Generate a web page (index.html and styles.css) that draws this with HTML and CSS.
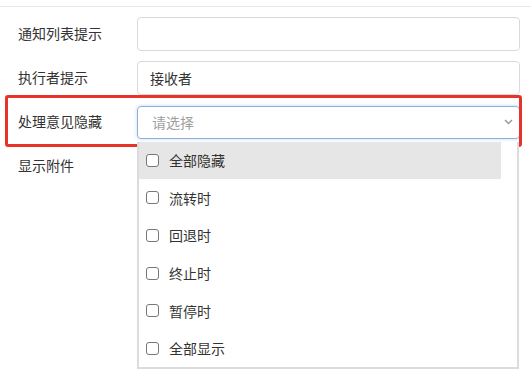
FILE: index.html
```html
<!DOCTYPE html>
<html lang="zh-CN">
<head>
    <meta charset="UTF-8">
    <meta name="viewport" content="width=device-width, initial-scale=1.0">
    <title>表单设置</title>
    <link rel="stylesheet" href="styles.css">
</head>
<body>
    <div class="top-line"></div>
    <div class="form">
        <div class="form-row">
            <label class="form-label">通知列表提示</label>
            <input class="form-input" type="text">
        </div>
        <div class="form-row">
            <label class="form-label">执行者提示</label>
            <input class="form-input" type="text" value="接收者">
        </div>
        <div class="form-row highlight">
            <label class="form-label">处理意见隐藏</label>
            <div class="select-wrap">
                <div class="select">
                    <span class="placeholder">请选择</span>
                    <svg class="chevron" width="9" height="6" viewBox="0 0 9 6">
                        <path d="M1 1 L4.5 4.5 L8 1" fill="none" stroke="#999" stroke-width="1.5"/>
                    </svg>
                </div>
                <ul class="dropdown">
                    <li class="option hover"><span class="check"></span>全部隐藏</li>
                    <li class="option"><span class="check"></span>流转时</li>
                    <li class="option"><span class="check"></span>回退时</li>
                    <li class="option"><span class="check"></span>终止时</li>
                    <li class="option"><span class="check"></span>暂停时</li>
                    <li class="option"><span class="check"></span>全部显示</li>
                </ul>
            </div>
        </div>
        <div class="form-row">
            <label class="form-label">显示附件</label>
        </div>
    </div>
</body>
</html>
```

FILE: styles.css
```css
html, body {
    min-height: 100vh;
}
body {
    margin: 0;
    font-family: "Noto Sans CJK SC", "Microsoft YaHei", sans-serif;
    font-size: 14px;
    color: #333;
    background: #fff;
}
.top-line {
    height: 6px;
    border-bottom: 1px solid #e6e6e6;
}
.form {
    padding: 10px 11px 0 18px;
}
.form-row {
    display: flex;
    align-items: center;
    height: 34px;
    margin-bottom: 10px;
}
.form-label {
    width: 119px;
    flex-shrink: 0;
    position: relative;
    top: -1px;
}
.form-input {
    flex: 1;
    height: 34px;
    box-sizing: border-box;
    border: 1px solid #d9d9d9;
    border-radius: 4px;
    padding: 0 12px;
    font-family: inherit;
    font-size: 14px;
    color: #333;
    outline: none;
}
.highlight {
    position: relative;
}
.highlight::after {
    content: "";
    position: absolute;
    left: -13px;
    right: -2px;
    top: -10px;
    bottom: -8px;
    border: 3px solid #e8332b;
    border-radius: 3px;
    pointer-events: none;
}
.select-wrap {
    flex: 1;
    position: relative;
    height: 33px;
}
.select {
    height: 33px;
    box-sizing: border-box;
    border: 1px solid #8fb0d9;
    border-radius: 4px;
    box-shadow: 0 0 3px 1px rgba(102, 160, 230, 0.25);
    display: flex;
    align-items: center;
    justify-content: space-between;
    padding: 0 6px 0 14px;
}
.placeholder {
    color: #a0a0a0;
}
.dropdown {
    position: absolute;
    top: 36px;
    left: 0;
    right: 1px;
    margin: 0;
    padding: 0;
    list-style: none;
    background: #fff;
    border: 2px solid #dcdcdc;
    border-top: none;
    z-index: 2;
}
.option {
    height: 37.6px;
    display: flex;
    align-items: center;
    padding-left: 7px;
    margin-right: 16px;
    color: #333;
}
.option.hover {
    background: #e6e6e6;
}
.check {
    width: 11px;
    height: 11px;
    border: 1px solid #777;
    border-radius: 3px;
    background: #fff;
    margin-right: 10px;
}
```
